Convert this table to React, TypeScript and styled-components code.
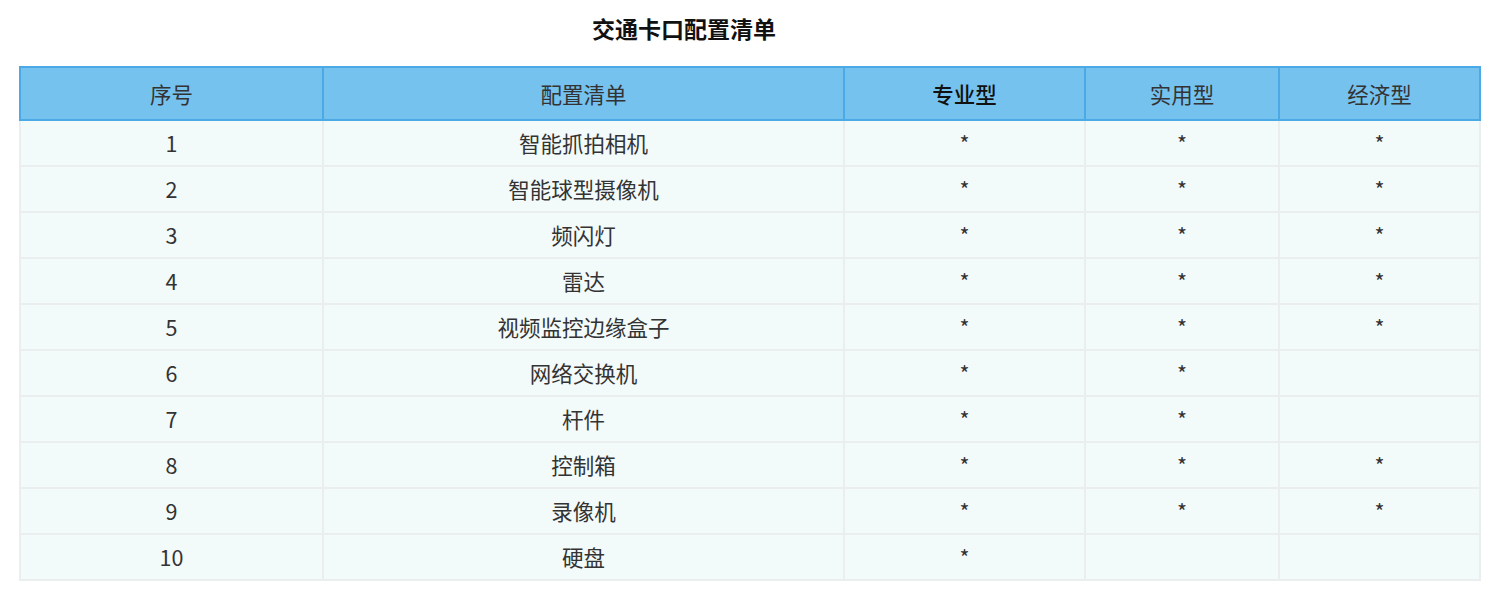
import React from "react";
import styled, { createGlobalStyle } from "styled-components";

const GlobalStyle = createGlobalStyle`
  html, body { margin: 0; padding: 0; background: #ffffff; }
  body { font-family: "Noto Sans CJK SC", "Noto Sans", sans-serif; color: #333; }
`;

const Page = styled.div`
  padding: 0 19px 0 19px;
`;

const Title = styled.h1`
  margin: 0;
  height: 66px;
  box-sizing: border-box;
  padding: 12px 132px 0 0;
  margin-left: -19px;
  margin-right: -19px;
  text-align: center;
  font-size: 23px;
  line-height: 32px;
  font-weight: 700;
  color: #111;
`;

const Table = styled.table`
  width: 1460px;
  border-collapse: collapse;
  table-layout: fixed;
  font-size: 21.5px;
  text-align: center;
`;

const HeadCell = styled.th<{ $strong?: boolean }>`
  height: 51px;
  padding: 0;
  background: #76c2ef;
  border: 2px solid #4ba9e6;
  font-weight: ${(p) => (p.$strong ? 500 : 400)};
  color: ${(p) => (p.$strong ? "#111" : "#333")};
  line-height: 1;
`;

const Cell = styled.td`
  height: 44px;
  padding: 0;
  background: #f3fafa;
  border: 2px solid #ebeeef;
  color: #333;
  line-height: 1;
`;

const rows: [string, string, boolean, boolean, boolean][] = [
  ["1", "智能抓拍相机", true, true, true],
  ["2", "智能球型摄像机", true, true, true],
  ["3", "频闪灯", true, true, true],
  ["4", "雷达", true, true, true],
  ["5", "视频监控边缘盒子", true, true, true],
  ["6", "网络交换机", true, true, false],
  ["7", "杆件", true, true, false],
  ["8", "控制箱", true, true, true],
  ["9", "录像机", true, true, true],
  ["10", "硬盘", true, false, false],
];

export default function App() {
  return (
    <Page>
      <GlobalStyle />
      <Title>交通卡口配置清单</Title>
      <Table>
        <colgroup>
          <col style={{ width: 303 }} />
          <col style={{ width: 521 }} />
          <col style={{ width: 241 }} />
          <col style={{ width: 194 }} />
          <col style={{ width: 201 }} />
        </colgroup>
        <thead>
          <tr>
            <HeadCell>序号</HeadCell>
            <HeadCell>配置清单</HeadCell>
            <HeadCell $strong>专业型</HeadCell>
            <HeadCell>实用型</HeadCell>
            <HeadCell>经济型</HeadCell>
          </tr>
        </thead>
        <tbody>
          {rows.map(([n, name, a, b, c]) => (
            <tr key={n}>
              <Cell>{n}</Cell>
              <Cell>{name}</Cell>
              <Cell>{a ? "*" : ""}</Cell>
              <Cell>{b ? "*" : ""}</Cell>
              <Cell>{c ? "*" : ""}</Cell>
            </tr>
          ))}
        </tbody>
      </Table>
    </Page>
  );
}
